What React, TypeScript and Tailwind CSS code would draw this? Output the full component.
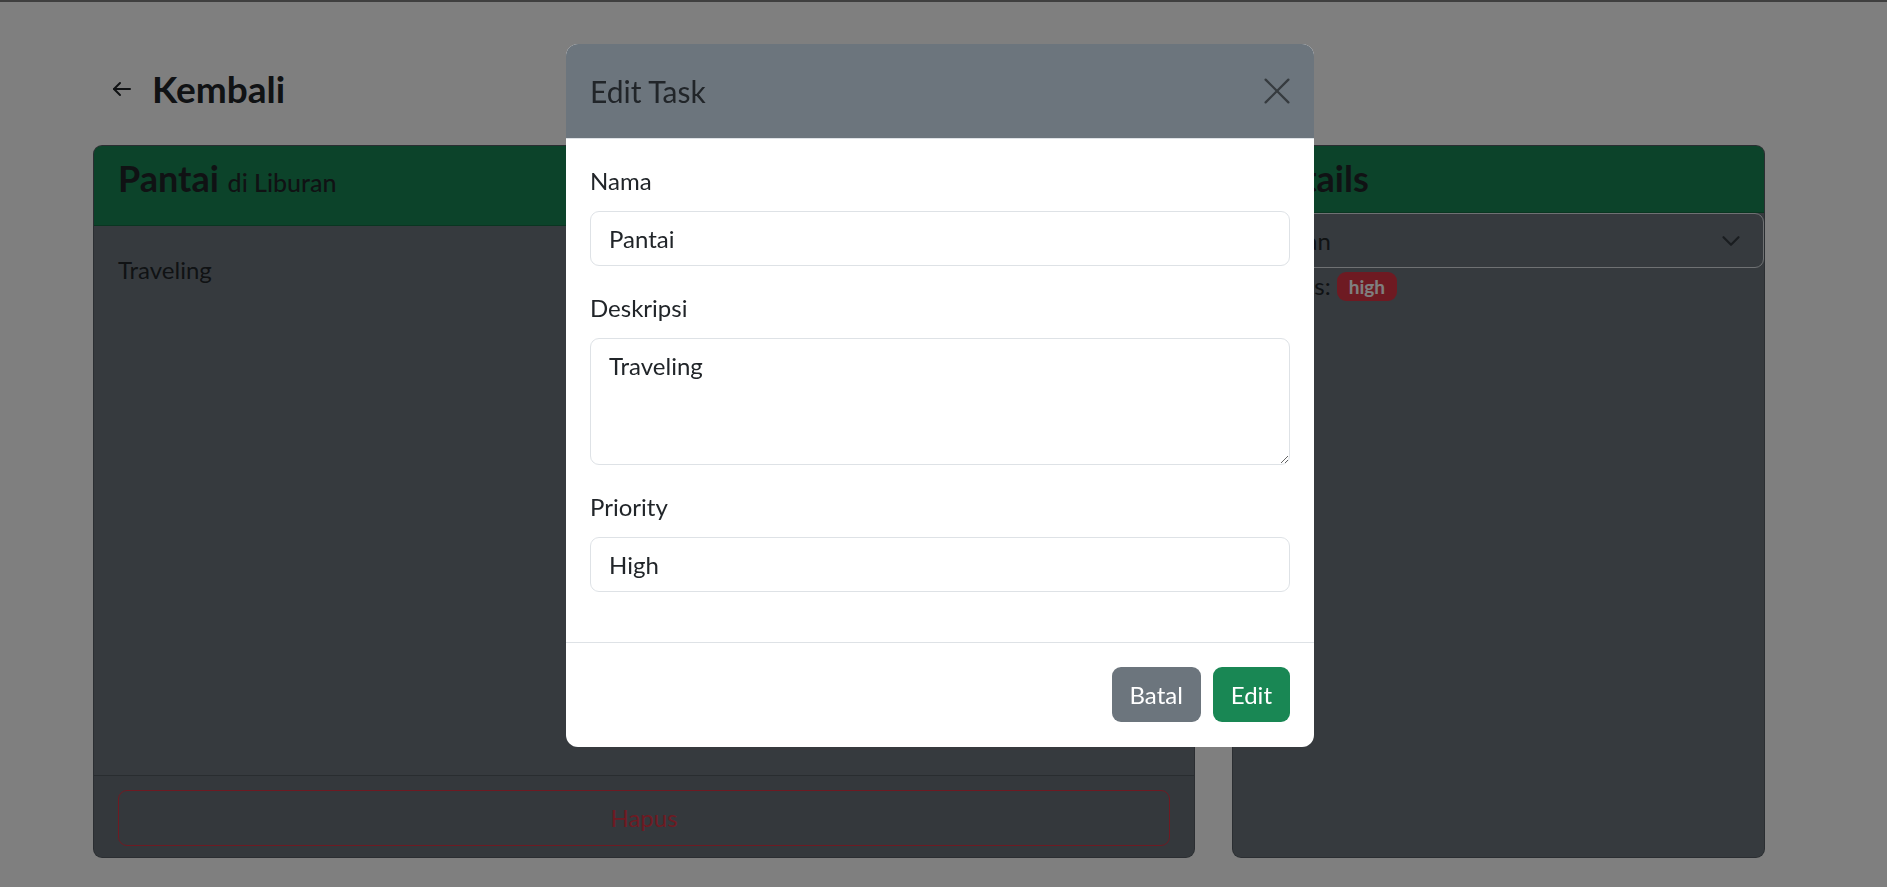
import React from "react";

export default function App() {
  return (
    <div className="relative min-h-[887px] w-[1887px] bg-white font-['Lato',sans-serif] text-[#212529]">
      <div className="h-[2px] w-full bg-[#7f7f7f]" />
      {/* Page */}
      <div className="w-[1765px] pl-[93px] pt-[65px]">
        <div className="flex h-[43px] items-center pl-[19px]">
          <svg width="20" height="16" viewBox="0 0 20 16" fill="none" stroke="#212529" strokeWidth="2" strokeLinecap="round" strokeLinejoin="round">
            <path d="M18 8H2" />
            <path d="M8 2 2 8l6 6" />
          </svg>
          <h4 className="ml-[20px] text-[37px] font-bold leading-[43px]">Kembali</h4>
        </div>
        <div className="mt-[35px] flex gap-[37px]">
          {/* Left card */}
          <div className="flex h-[713px] w-[1102px] flex-col overflow-hidden rounded-[9px] border border-black/20 bg-[#6c757d]">
            <div className="border-b border-black/20 bg-[#198754] px-[24px] pb-[8px] pt-[11px]">
              <h4 className="mb-[13px] text-[36px] font-bold leading-[43px]">
                Pantai <small className="text-[25px] font-medium">di Liburan</small>
              </h4>
            </div>
            <div className="flex-1 px-[24px] pb-[24px] pt-[26px] text-[24px] leading-[36px]">Traveling</div>
            <div className="border-t border-black/20 bg-black/[0.03] px-[24px] pb-[11px] pt-[14px]">
              <button className="h-[56px] w-full rounded-[9px] border border-[#dc3545] text-[24px] leading-[36px] text-[#dc3545]">
                Hapus
              </button>
            </div>
          </div>
          {/* Right card */}
          <div className="flex h-[713px] w-[533px] flex-col overflow-hidden rounded-[9px] border border-black/20 bg-[#6c757d]">
            <div className="border-b border-black/20 bg-[#198754] px-[24px] pb-[12px] pt-[11px]">
              <h4 className="text-[36px] font-bold leading-[43px]">Details</h4>
            </div>
            <div className="text-[24px] leading-[36px]">
              <div className="flex h-[55px] items-center justify-between rounded-[9px] border border-[#dee2e6] pl-[18px] pr-[20px]">
                <span>Liburan</span>
                <svg width="24" height="18" viewBox="0 0 16 12" fill="none" stroke="#343a40" strokeWidth="1.5" strokeLinecap="round" strokeLinejoin="round">
                  <path d="m3 3.5 5 5 5-5" />
                </svg>
              </div>
              <div className="flex items-center pl-[4px]">
                <span>Prioritas:</span>
                <span className="ml-[6px] rounded-[9px] bg-[#dc3545] px-[12px] text-[19px] font-bold leading-[29px] text-white">high</span>
              </div>
            </div>
          </div>
        </div>
      </div>

      {/* Backdrop */}
      <div className="fixed inset-0 bg-black/50" />

      {/* Modal */}
      <div className="fixed inset-0 pl-[566px] pt-[44px]">
        <div className="w-[748px] overflow-hidden rounded-[12px] bg-white">
          <div className="flex h-[95px] items-center justify-between border-b border-[#dee2e6] bg-[#6c757d] pl-[24px] pr-[24px]">
            <h5 className="text-[30px] leading-[36px]">Edit Task</h5>
            <svg width="26" height="26" viewBox="0 0 16 16" fill="none" stroke="#363b3f" strokeWidth="1.4" strokeLinecap="round">
              <path d="M1 1 15 15" />
              <path d="M15 1 1 15" />
            </svg>
          </div>
          <div className="px-[24px] pb-[26px] pt-[24px] text-[24px] leading-[36px]">
            <div className="mb-[24px]">
              <label className="mb-[12px] block">Nama</label>
              <div className="flex h-[55px] items-center rounded-[9px] border border-[#dee2e6] px-[18px]">Pantai</div>
            </div>
            <div className="mb-[24px]">
              <label className="mb-[12px] block">Deskripsi</label>
              <textarea
                className="block h-[127px] w-full resize-y rounded-[9px] border border-[#dee2e6] px-[18px] py-[9px] text-[24px] leading-[36px] text-[#212529] outline-none"
                defaultValue="Traveling"
              />
            </div>
            <div className="mb-[24px]">
              <label className="mb-[12px] block">Priority</label>
              <div className="flex h-[55px] items-center rounded-[9px] border border-[#dee2e6] px-[18px]">High</div>
            </div>
          </div>
          <div className="flex justify-end gap-[12px] border-t border-[#dee2e6] px-[24px] pb-[25px] pt-[24px]">
            <button className="h-[55px] rounded-[9px] bg-[#6c757d] px-[18px] text-[24px] leading-[36px] text-white">Batal</button>
            <button className="h-[55px] rounded-[9px] bg-[#198754] px-[18px] text-[24px] leading-[36px] text-white">Edit</button>
          </div>
        </div>
      </div>
    </div>
  );
}
